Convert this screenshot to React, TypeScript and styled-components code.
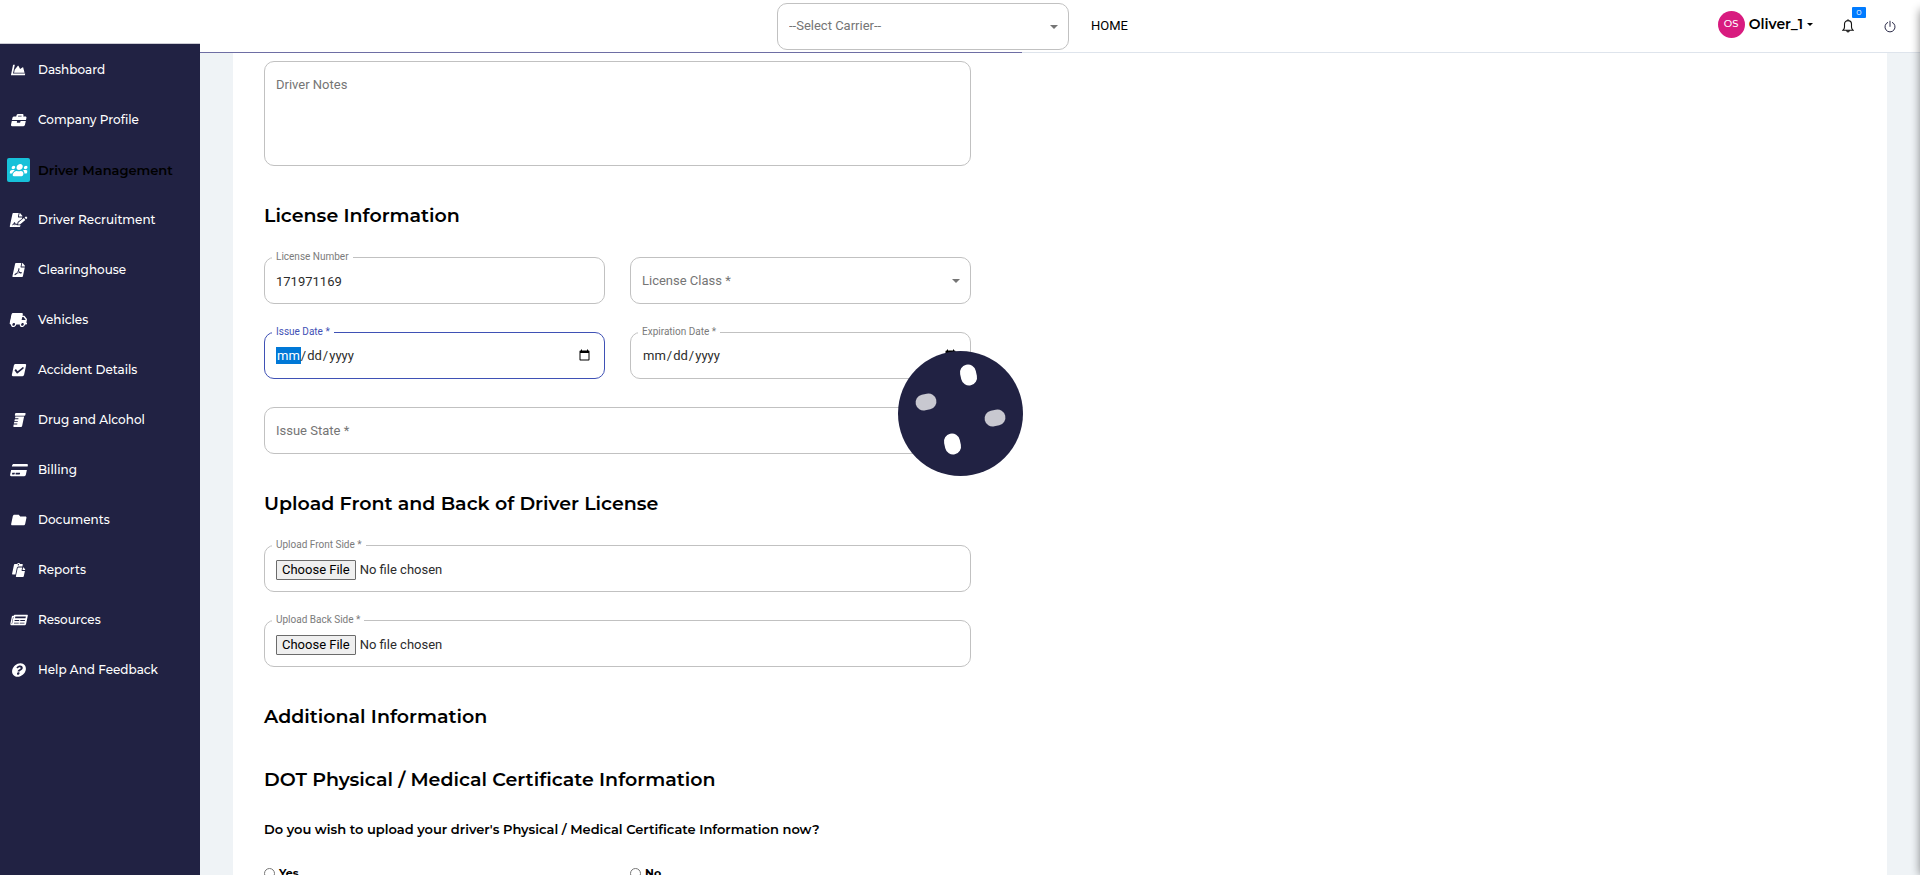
import React from 'react';
import styled, { createGlobalStyle, css } from 'styled-components';
import type { IconType } from 'react-icons';
import {
  FaChartArea,
  FaBriefcase,
  FaUsers,
  FaFileSignature,
  FaFilePdf,
  FaTruck,
  FaCheckSquare,
  FaPrescriptionBottle,
  FaCreditCard,
  FaFolder,
  FaPaste,
  FaNewspaper,
  FaQuestionCircle,
} from 'react-icons/fa';

const navy = '#212243';
const display = "Montserrat, Inter, 'Open Sans', sans-serif";
const text = "Roboto, 'Liberation Sans', sans-serif";

const GlobalStyle = createGlobalStyle`
  *, *::before, *::after { box-sizing: border-box; }
  body { margin: 0; background: #eff3f6; color: #000; font-family: ${display}; }
  input, select, textarea, button { font: inherit; color: inherit; }
`;

const Shell = styled.div`
  display: flex;
  flex-direction: column;
  height: 100vh;
  overflow: hidden;
`;

const Header = styled.header`
  display: grid;
  grid-template-columns: 1fr auto 1fr;
  align-items: center;
  height: 53px;
  flex: none;
  padding: 0 17px 0 2px;
  background: #fff;
  border-bottom: 1px solid #dee4ec;
`;

const HeaderCenter = styled.div`
  grid-column: 2;
  display: flex;
  align-items: center;
  gap: 22px;
`;

const HomeLink = styled.a`
  font: 400 13px/20px ${text};
  color: #000;
  text-decoration: none;
`;

const Account = styled.div`
  display: flex;
  align-items: center;
  justify-content: flex-end;
  gap: 16px;
  padding-bottom: 4px;
`;

const UserButton = styled.button`
  display: flex;
  align-items: center;
  gap: 4px;
  margin-right: 6px;
  padding: 0;
  border: 0;
  background: none;
  font: 600 14px/20px ${display};
`;

const Avatar = styled.span`
  width: 27px;
  height: 27px;
  border-radius: 50%;
  background: #d81b7f;
  color: #fff;
  font-size: 10px;
  font-weight: 500;
  line-height: 26px;
  text-align: center;
`;

const Caret = styled.span`
  border: 3px solid transparent;
  border-top-color: #000;
  border-bottom: 0;
`;

const IconButton = styled.button`
  position: relative;
  display: flex;
  padding: 4px 7px 0;
  border: 0;
  background: none;
`;

const Badge = styled.span`
  position: absolute;
  left: 17px;
  top: -8px;
  width: 14px;
  height: 11px;
  border-radius: 1px;
  background: #007bff;
  color: #fff;
  font-size: 8px;
  line-height: 10px;
  text-align: center;
`;

const Body = styled.div`
  display: flex;
  flex: 1;
  min-height: 0;
`;

const Sidebar = styled.nav`
  position: relative;
  width: 200px;
  flex: none;
  margin-top: -9px;
  background: ${navy};
  box-shadow: 0 -1px 0 #ccccd4;
`;

const NavItem = styled.a<{ $active?: boolean }>`
  display: flex;
  align-items: center;
  gap: 8px;
  height: 50px;
  padding: 1px 0 0 7px;
  color: ${(p) => (p.$active ? '#000' : '#fff')};
  font-size: ${(p) => (p.$active ? 13 : 12)}px;
  font-weight: ${(p) => (p.$active ? 600 : 500)};
  text-decoration: none;
`;

const NavIcon = styled.span<{ $active?: boolean }>`
  display: flex;
  align-items: center;
  justify-content: center;
  width: 23px;
  height: 24px;
  border-radius: 2px;
  color: #fff;
  background: ${(p) => (p.$active ? '#17c1d9' : 'transparent')};
  svg {
    flex: none;
    width: 18px;
    height: 14px;
    transform: skewX(-12deg);
  }
`;

const Main = styled.main`
  position: relative;
  flex: 1;
  min-width: 0;
  padding: 0 33px;
  overflow: hidden;
`;

const Progress = styled.div`
  position: fixed;
  top: 52px;
  left: 200px;
  right: calc(50% - 62px);
  height: 1px;
  background: #6e6ea4;
`;

const Panel = styled.section`
  min-height: 100%;
  padding: 8px 31px;
  background: #fff;
`;

const Form = styled.form`
  max-width: 707px;
`;

const Heading = styled.h2`
  margin: 0;
  padding-top: 37px;
  font-size: 19px;
  font-weight: 600;
  line-height: 26px;
`;

const Grid = styled.div`
  display: grid;
  grid-template-columns: 1fr 1fr;
  gap: 28px 25px;
  padding-top: 28px;
`;

const Question = styled.p`
  margin: 0;
  padding-top: 26px;
  font-size: 13px;
  font-weight: 600;
  line-height: 20px;
`;

const Field = styled.div<{ $wide?: boolean }>`
  position: relative;
  ${(p) => p.$wide && 'grid-column: 1 / -1;'}
`;

const FieldLabel = styled.label<{ $active?: boolean }>`
  position: absolute;
  top: -6px;
  left: 8px;
  padding: 0 4px;
  background: #fff;
  color: ${(p) => (p.$active ? '#3f51b5' : '#7b7b7b')};
  font: 10px/12px ${text};
`;

const control = css`
  display: block;
  width: 100%;
  height: 47px;
  padding: 0 11px;
  border: 1px solid #c1c1c1;
  border-radius: 10px;
  background: #fff;
  color: #2c2c2c;
  font: 13px/20px ${text};
  outline: 0;
`;

const TextInput = styled.input`
  ${control}
  padding-top: 2px;
`;

const DateInput = styled.input`
  ${control}
  &:focus {
    border-color: #3f51b5;
  }
  &:focus::-webkit-datetime-edit-month-field {
    background: #0078d7;
    color: #fff;
  }
`;

const FileInput = styled.input`
  ${control}
  padding: 14px 11px 12px;
  &::file-selector-button {
    height: 20px;
    margin: 0 4px 0 0;
    padding: 0 5px;
    border: 1px solid #6b6b6b;
    border-radius: 1px;
    background: #efefef;
    color: #000;
    font: 13px/18px ${text};
  }
`;

const Notes = styled.textarea`
  ${control}
  height: 105px;
  padding-top: 13px;
  resize: none;
  &::placeholder {
    color: #757575;
  }
`;

const SelectWrap = styled.div<{ $width?: string }>`
  position: relative;
  width: ${(p) => p.$width ?? '100%'};
  &::after {
    content: '';
    position: absolute;
    right: 11px;
    top: 22px;
    border: 4px solid transparent;
    border-top-color: #757575;
    border-bottom: 0;
    pointer-events: none;
  }
`;

const Select = styled.select`
  ${control}
  color: #757575;
  appearance: none;
`;

const Options = styled.div`
  display: grid;
  grid-template-columns: 1fr 1fr;
  gap: 25px;
  padding-top: 24px;
`;

const Option = styled.label`
  display: flex;
  align-items: center;
  gap: 4px;
  font-size: 11px;
  font-weight: 700;
  line-height: 20px;
  input {
    width: 11px;
    height: 11px;
    margin: 0;
  }
`;

const Spinner = styled.svg`
  position: fixed;
  left: calc(50% - 62px);
  top: calc(50% - 87px);
  width: 125px;
  height: 125px;
`;

const DrawerEdge = styled.div`
  position: fixed;
  top: 10px;
  bottom: 0;
  left: 100%;
  width: 20px;
  box-shadow: 0 0 10px rgba(0, 0, 0, 0.45);
`;

const items: { label: string; icon: IconType; active?: boolean }[] = [
  { label: 'Dashboard', icon: FaChartArea },
  { label: 'Company Profile', icon: FaBriefcase },
  { label: 'Driver Management', icon: FaUsers, active: true },
  { label: 'Driver Recruitment', icon: FaFileSignature },
  { label: 'Clearinghouse', icon: FaFilePdf },
  { label: 'Vehicles', icon: FaTruck },
  { label: 'Accident Details', icon: FaCheckSquare },
  { label: 'Drug and Alcohol', icon: FaPrescriptionBottle },
  { label: 'Billing', icon: FaCreditCard },
  { label: 'Documents', icon: FaFolder },
  { label: 'Reports', icon: FaPaste },
  { label: 'Resources', icon: FaNewspaper },
  { label: 'Help And Feedback', icon: FaQuestionCircle },
];

function SelectField({ id, label, width }: { id: string; label: string; width?: string }) {
  return (
    <SelectWrap $width={width}>
      <Select id={id} aria-label={label} defaultValue="">
        <option value="">{label}</option>
      </Select>
    </SelectWrap>
  );
}

export default function App() {
  return (
    <Shell>
      <GlobalStyle />
      <Header>
        <HeaderCenter>
          <SelectField id="carrier" label="--Select Carrier--" width="292px" />
          <HomeLink href="#home">HOME</HomeLink>
        </HeaderCenter>
        <Account>
          <UserButton type="button">
            <Avatar>OS</Avatar>
            Oliver_1
            <Caret />
          </UserButton>
          <IconButton type="button" aria-label="Notifications">
            <svg width="12" height="14" viewBox="0 0 12 14" fill="none" stroke="#111" strokeWidth="1.1">
              <path d="M1 11.2h10c-1-.9-1.5-1.8-1.5-3.2V5.200C9.500 3 8 1.600 6 1.600S2.500 3 2.500 5.200V8c0 1.400-.5 2.300-1.500 3.200zM4.800 11.500a1.200 1.400 0 0 0 2.400 0M6 .3v1.300" />
            </svg>
            <Badge>0</Badge>
          </IconButton>
          <IconButton type="button" aria-label="Log out">
            <svg width="12" height="13" viewBox="0 0 12 13" fill="none" stroke="#2a2a48" strokeWidth="1">
              <path d="M4 2.300a5 5 0 1 0 4 0M6 .8v6" />
            </svg>
          </IconButton>
        </Account>
      </Header>
      <Body>
        <Sidebar aria-label="Main">
          {items.map(({ label, icon: Icon, active }) => (
            <NavItem key={label} href="#" $active={active}>
              <NavIcon $active={active}>
                <Icon />
              </NavIcon>
              {label}
            </NavItem>
          ))}
        </Sidebar>
        <Main>
          <Panel>
            <Form>
              <Notes aria-label="Driver Notes" placeholder="Driver Notes" />

              <Heading>License Information</Heading>
              <Grid>
                <Field>
                  <TextInput id="number" type="text" defaultValue="171971169" />
                  <FieldLabel htmlFor="number">License Number</FieldLabel>
                </Field>
                <Field>
                  <SelectField id="class" label="License Class *" />
                </Field>
                <Field>
                  <DateInput id="issued" type="date" autoFocus />
                  <FieldLabel htmlFor="issued" $active>Issue Date *</FieldLabel>
                </Field>
                <Field>
                  <DateInput id="expires" type="date" />
                  <FieldLabel htmlFor="expires">Expiration Date *</FieldLabel>
                </Field>
                <Field $wide>
                  <SelectField id="state" label="Issue State *" />
                </Field>
              </Grid>

              <Heading>Upload Front and Back of Driver License</Heading>
              <Grid>
                <Field $wide>
                  <FileInput id="front" type="file" />
                  <FieldLabel htmlFor="front">Upload Front Side *</FieldLabel>
                </Field>
                <Field $wide>
                  <FileInput id="back" type="file" />
                  <FieldLabel htmlFor="back">Upload Back Side *</FieldLabel>
                </Field>
              </Grid>

              <Heading>Additional Information</Heading>
              <Heading>DOT Physical / Medical Certificate Information</Heading>
              <Question>Do you wish to upload your driver's Physical / Medical Certificate Information now?</Question>
              <Options role="radiogroup" aria-label="Upload certificate now">
                <Option>
                  <input type="radio" name="upload-now" value="yes" />
                  Yes
                </Option>
                <Option>
                  <input type="radio" name="upload-now" value="no" />
                  No
                </Option>
              </Options>
            </Form>
          </Panel>
        </Main>
      </Body>
      <Progress />
      <Spinner viewBox="0 0 125 125" role="img" aria-label="Loading">
        <circle cx="62.5" cy="62.5" r="62.5" fill={navy} />
        <g fill="#fff">
          <rect x="-8" y="-10.5" width="16" height="21" rx="8" transform="translate(70.5 24) rotate(-13)" />
          <rect x="-8" y="-10.5" width="16" height="21" rx="8" transform="translate(54.5 93) rotate(-13)" />
        </g>
        <g fill="#c8c8d0">
          <rect x="-10.5" y="-8" width="21" height="16" rx="8" transform="translate(28 51) rotate(-13)" />
          <rect x="-10.5" y="-8" width="21" height="16" rx="8" transform="translate(97 67) rotate(-13)" />
        </g>
      </Spinner>
      <DrawerEdge />
    </Shell>
  );
}
